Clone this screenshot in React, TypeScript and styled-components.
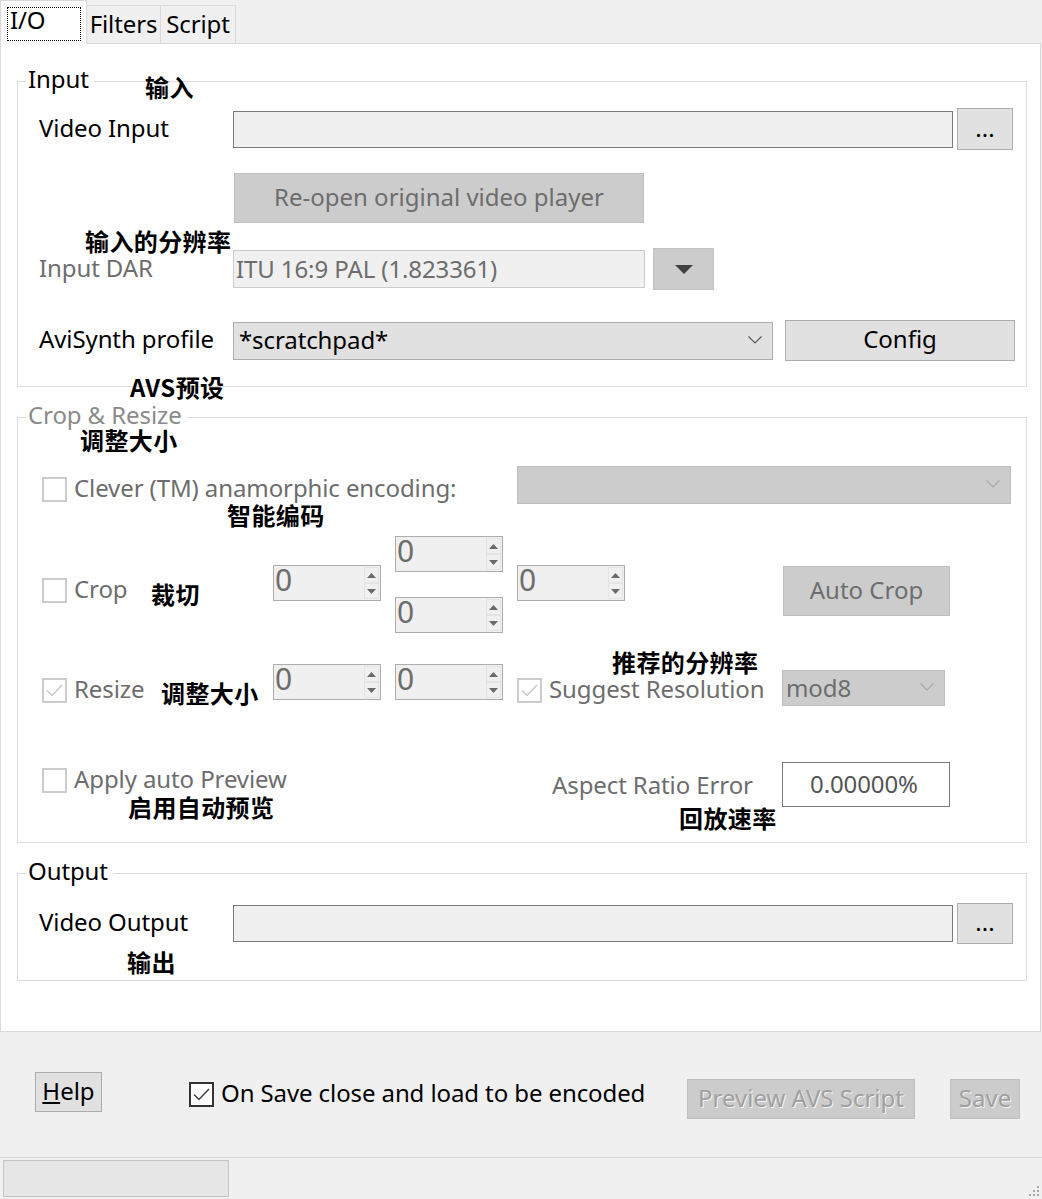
import React from "react";
import styled, { createGlobalStyle, css } from "styled-components";

const UI_FONT = `"Noto Sans", "Open Sans", sans-serif`;
const CJK_FONT = `"Noto Sans CJK SC", "Noto Sans", sans-serif`;
const GRAY_TEXT = "#6d6d6d";

const GlobalStyle = createGlobalStyle`
  * { box-sizing: border-box; }
  html, body { margin: 0; padding: 0; background: #f0f0f0; }
  body {
    font-family: ${UI_FONT};
    font-size: 24px;
    letter-spacing: -0.1px;
    color: #000;
  }
`;

const Window = styled.div`
  width: 1042px;
  height: 1199px;
  display: flex;
  flex-direction: column;
  background: #f0f0f0;
  overflow: hidden;
`;

const TabStrip = styled.div`
  height: 43px;
  flex: none;
  display: flex;
  align-items: flex-end;
  position: relative;
  z-index: 2;
`;

const Tab = styled.div<{ $w: number; $active?: boolean }>`
  width: ${(p) => p.$w}px;
  height: 38px;
  line-height: 35px;
  text-align: center;
  white-space: nowrap;
  border-top: 1px solid #d9d9d9;
  border-right: 1px solid #d9d9d9;
  ${(p) =>
    p.$active &&
    css`
      height: 44px;
      margin-bottom: -1px;
      padding: 6px 0 0 6px;
      text-align: left;
      background: #fff;
      border-left: 1px solid #d9d9d9;
    `}
`;

const FocusRect = styled.div`
  width: 74px;
  height: 34px;
  padding-left: 2px;
  line-height: 23px;
  border: 1px dotted #000;
`;

const TabPanel = styled.div`
  width: 1041px;
  height: 989px;
  flex: none;
  display: flex;
  flex-direction: column;
  gap: 30px;
  padding-top: 37px;
  background: #fff;
  border: 1px solid #d9d9d9;
`;

const Group = styled.section<{ $h: number }>`
  position: relative;
  width: 1010px;
  height: ${(p) => p.$h}px;
  margin-left: 16px;
  flex: none;
  display: flex;
  flex-direction: column;
  border: 1px solid #dcdcdc;
`;

const Legend = styled.span<{ $disabled?: boolean }>`
  position: absolute;
  top: -19px;
  left: 8px;
  padding: 0 5px 0 2px;
  line-height: 32px;
  background: #fff;
  color: ${(p) => (p.$disabled ? "#8a8a8a" : "#000")};
`;

const Note = styled.span<{ $x: number; $y: number }>`
  position: absolute;
  left: ${(p) => p.$x}px;
  top: ${(p) => p.$y}px;
  font-family: ${CJK_FONT};
  font-weight: 700;
  font-size: 24px;
  letter-spacing: 0.4px;
  line-height: 26px;
  color: #000;
  white-space: nowrap;
  z-index: 3;
`;

const Row = styled.div<{ $mt: number; $h: number; $pl?: number; $top?: boolean }>`
  display: flex;
  align-items: ${(p) => (p.$top ? "flex-start" : "center")};
  margin-top: ${(p) => p.$mt}px;
  height: ${(p) => p.$h}px;
  padding-left: ${(p) => p.$pl ?? 21}px;
  flex: none;
`;

const FieldLabel = styled.span<{ $disabled?: boolean }>`
  width: 194px;
  flex: none;
  padding-bottom: 4px;
  white-space: nowrap;
  color: ${(p) => (p.$disabled ? GRAY_TEXT : "#000")};
`;

const PathBox = styled.div`
  width: 720px;
  height: 37px;
  flex: none;
  background: #f0f0f0;
  border: 1px solid #7a7a7a;
`;

const DarBox = styled.div`
  width: 412px;
  height: 38px;
  flex: none;
  padding-left: 2px;
  line-height: 35px;
  white-space: nowrap;
  color: ${GRAY_TEXT};
  background: #f0f0f0;
  border: 1px solid #cccccc;
`;

const ValueBox = styled.div`
  width: 168px;
  height: 45px;
  flex: none;
  padding-right: 4px;
  line-height: 41px;
  text-align: center;
  color: #555;
  background: #fff;
  border: 1px solid #7a7a7a;
`;

type Variant = "normal" | "disabled" | "faded";

const Button = styled.button<{
  $w: number;
  $h: number;
  $variant?: Variant;
  $ml?: number;
  $mt?: number;
}>`
  width: ${(p) => p.$w}px;
  height: ${(p) => p.$h}px;
  margin: ${(p) => p.$mt ?? 0}px 0 0 ${(p) => p.$ml ?? 0}px;
  flex: none;
  padding: 0 0 4px;
  font: inherit;
  white-space: nowrap;
  background: #e1e1e1;
  border: 1px solid #adadad;
  color: #000;
  ${(p) =>
    p.$variant === "disabled" &&
    css`
      background: #cccccc;
      border-color: #bfbfbf;
      color: ${GRAY_TEXT};
    `}
  ${(p) =>
    p.$variant === "faded" &&
    css`
      background: #cccccc;
      border-color: #bfbfbf;
      color: #a0a0a0;
      text-shadow: 1px 1px 0 #f4f4f4;
    `}
`;

const DropButton = styled.div`
  width: 61px;
  height: 42px;
  margin-left: 8px;
  flex: none;
  display: flex;
  align-items: center;
  justify-content: center;
  background: #cccccc;
  border: 1px solid #c2c2c2;
`;

const Combo = styled.div<{ $w: number; $h: number; $disabled?: boolean; $mt?: number; $pl?: number }>`
  width: ${(p) => p.$w}px;
  height: ${(p) => p.$h}px;
  margin-top: ${(p) => p.$mt ?? 0}px;
  flex: none;
  display: flex;
  align-items: center;
  justify-content: space-between;
  padding: 0 10px 2px ${(p) => p.$pl ?? 5}px;
  white-space: nowrap;
  background: ${(p) => (p.$disabled ? "#cccccc" : "#e1e1e1")};
  border: 1px solid ${(p) => (p.$disabled ? "#bfbfbf" : "#adadad")};
  color: ${(p) => (p.$disabled ? GRAY_TEXT : "#000")};
`;

const CheckField = styled.div<{ $w?: number; $mt?: number; $ml?: number; $disabled?: boolean }>`
  ${(p) => (p.$w ? `width: ${p.$w}px;` : "")}
  height: 25px;
  margin: ${(p) => p.$mt ?? 0}px 0 0 ${(p) => p.$ml ?? 0}px;
  flex: none;
  display: flex;
  align-items: center;
  gap: 7px;
  white-space: nowrap;
  color: ${(p) => (p.$disabled ? GRAY_TEXT : "#000")};
`;

const CheckText = styled.span`
  line-height: 25px;
  padding-bottom: 5px;
`;

const Box = styled.span<{ $dark?: boolean }>`
  width: 25px;
  height: 25px;
  flex: none;
  display: flex;
  align-items: center;
  justify-content: center;
  background: #fff;
  border: 2px solid ${(p) => (p.$dark ? "#333" : "#cccccc")};
`;

const NumBox = styled.div<{ $mt?: number; $ml?: number }>`
  width: 108px;
  height: 36px;
  margin: ${(p) => p.$mt ?? 0}px 0 0 ${(p) => p.$ml ?? 0}px;
  flex: none;
  display: flex;
  justify-content: space-between;
  padding-left: 1px;
  font-size: 30px;
  line-height: 28px;
  color: ${GRAY_TEXT};
  background: #f0f0f0;
  border: 1px solid #adadad;
`;

const Spinner = styled.div`
  width: 15px;
  margin: 1px;
  display: flex;
  flex-direction: column;
`;

const SpinHalf = styled.span`
  flex: 1;
  display: flex;
  align-items: center;
  justify-content: center;
  background: #f0f0f0;
  border: 1px solid #e4e4e4;
`;

const NumColumn = styled.div`
  margin-left: 14px;
  display: flex;
  flex-direction: column;
  gap: 25px;
  flex: none;
`;

const SideLabel = styled.span`
  width: 230px;
  height: 25px;
  margin-top: 10px;
  flex: none;
  line-height: 25px;
  white-space: nowrap;
  color: ${GRAY_TEXT};
`;

const Footer = styled.div`
  height: 125px;
  flex: none;
  display: flex;
  align-items: flex-start;
  padding-left: 35px;
`;

const StatusBar = styled.div`
  height: 42px;
  flex: none;
  display: flex;
  justify-content: space-between;
  align-items: flex-end;
  padding: 2px 2px 2px 3px;
  border-top: 1px solid #d7d7d7;
`;

const StatusPanel = styled.div`
  width: 226px;
  height: 37px;
  align-self: flex-start;
  background: #e6e6e6;
  border: 1px solid #c4c4c4;
`;

const Chevron = ({ color }: { color: string }) => (
  <svg width="14" height="8" viewBox="0 0 14 8">
    <polyline points="0.5,0.5 7,7 13.5,0.5" fill="none" stroke={color} strokeWidth="1.1" />
  </svg>
);

const Tick = ({ color }: { color: string }) => (
  <svg width="17" height="13" viewBox="0 0 17 13">
    <polyline points="1,6.5 6,11.5 16,1" fill="none" stroke={color} strokeWidth="1.5" />
  </svg>
);

const Check = ({
  label,
  checked,
  dark,
  disabled = true,
  w,
  mt,
  ml,
}: {
  label: string;
  checked?: boolean;
  dark?: boolean;
  disabled?: boolean;
  w?: number;
  mt?: number;
  ml?: number;
}) => (
  <CheckField $w={w} $mt={mt} $ml={ml} $disabled={disabled}>
    <Box $dark={dark}>{checked && <Tick color={dark ? "#444" : "#c8c8c8"} />}</Box>
    <CheckText>{label}</CheckText>
  </CheckField>
);

const Arrow = ({ up }: { up?: boolean }) => (
  <svg width="9" height="5" viewBox="0 0 9 5">
    <polygon points={up ? "0,5 4.5,0 9,5" : "0,0 4.5,5 9,0"} fill="#6a6a6a" />
  </svg>
);

const Numeric = ({ mt, ml }: { mt?: number; ml?: number }) => (
  <NumBox $mt={mt} $ml={ml}>
    <span>0</span>
    <Spinner>
      <SpinHalf>
        <Arrow up />
      </SpinHalf>
      <SpinHalf>
        <Arrow />
      </SpinHalf>
    </Spinner>
  </NumBox>
);

const Grip = () => (
  <svg width="12" height="12" viewBox="0 0 12 12">
    {[
      [9, 1],
      [5, 5],
      [9, 5],
      [1, 9],
      [5, 9],
      [9, 9],
    ].map(([x, y]) => (
      <rect key={`${x}-${y}`} x={x} y={y} width="2" height="2" fill="#a8a8a8" />
    ))}
  </svg>
);

export default function App() {
  return (
    <>
      <GlobalStyle />
      <Window>
        <TabStrip>
          <Tab $w={87} $active>
            <FocusRect>I/O</FocusRect>
          </Tab>
          <Tab $w={74}>Filters</Tab>
          <Tab $w={75}>Script</Tab>
        </TabStrip>

        <TabPanel>
          <Group $h={306}>
            <Legend>Input</Legend>
            <Note $x={127} $y={-8}>输入</Note>
            <Note $x={67} $y={146}>输入的分辨率</Note>
            <Note $x={112} $y={292}>AVS预设</Note>

            <Row $mt={25} $h={44}>
              <FieldLabel>Video Input</FieldLabel>
              <PathBox />
              <Button $w={56} $h={42} $ml={4}>
                ...
              </Button>
            </Row>
            <Row $mt={22} $h={50} $pl={216}>
              <Button $w={410} $h={50} $variant="disabled">
                Re-open original video player
              </Button>
            </Row>
            <Row $mt={25} $h={42}>
              <FieldLabel $disabled>Input DAR</FieldLabel>
              <DarBox>ITU 16:9 PAL (1.823361)</DarBox>
              <DropButton>
                <svg width="18" height="9" viewBox="0 0 18 9">
                  <polygon points="0,0 18,0 9,9" fill="#404040" />
                </svg>
              </DropButton>
            </Row>
            <Row $mt={30} $h={41}>
              <FieldLabel>AviSynth profile</FieldLabel>
              <Combo $w={540} $h={38}>
                <span>*scratchpad*</span>
                <Chevron color="#555" />
              </Combo>
              <Button $w={230} $h={41} $ml={12}>
                Config
              </Button>
            </Row>
          </Group>

          <Group $h={426}>
            <Legend $disabled>Crop &amp; Resize</Legend>
            <Note $x={62} $y={9}>调整大小</Note>
            <Note $x={209} $y={84}>智能编码</Note>
            <Note $x={133} $y={163}>裁切</Note>
            <Note $x={143} $y={262}>调整大小</Note>
            <Note $x={594} $y={231}>推荐的分辨率</Note>
            <Note $x={110} $y={376}>启用自动预览</Note>
            <Note $x={661} $y={387}>回放速率</Note>

            <Row $mt={48} $h={38} $pl={24} $top>
              <Check label="Clever (TM) anamorphic encoding:" w={475} mt={11} />
              <Combo $w={494} $h={38} $disabled>
                <span />
                <Chevron color="#a9a9a9" />
              </Combo>
            </Row>
            <Row $mt={32} $h={97} $pl={24} $top>
              <Check label="Crop" w={231} mt={42} />
              <Numeric mt={29} />
              <NumColumn>
                <Numeric />
                <Numeric />
              </NumColumn>
              <Numeric mt={29} ml={14} />
              <Button $w={167} $h={50} $ml={158} $mt={30} $variant="disabled">
                Auto Crop
              </Button>
            </Row>
            <Row $mt={31} $h={42} $pl={24} $top>
              <Check label="Resize" checked w={231} mt={14} />
              <Numeric />
              <Numeric ml={14} />
              <Check label="Suggest Resolution" checked w={265} mt={14} ml={14} />
              <Combo $w={163} $h={36} $mt={6} $pl={3} $disabled>
                <span>mod8</span>
                <Chevron color="#a9a9a9" />
              </Combo>
            </Row>
            <Row $mt={56} $h={45} $pl={24} $top>
              <Check label="Apply auto Preview" w={510} mt={6} />
              <SideLabel>Aspect Ratio Error</SideLabel>
              <ValueBox>0.00000%</ValueBox>
            </Row>
          </Group>

          <Group $h={108}>
            <Legend>Output</Legend>
            <Note $x={109} $y={75}>输出</Note>
            <Row $mt={29} $h={41}>
              <FieldLabel>Video Output</FieldLabel>
              <PathBox />
              <Button $w={56} $h={41} $ml={4}>
                ...
              </Button>
            </Row>
          </Group>
        </TabPanel>

        <Footer>
          <Button $w={67} $h={40} $mt={40}>
            <u>H</u>elp
          </Button>
          <Check
            label="On Save close and load to be encoded"
            checked
            dark
            disabled={false}
            w={498}
            mt={50}
            ml={87}
          />
          <Button $w={228} $h={40} $mt={47} $variant="faded">
            Preview AVS Script
          </Button>
          <Button $w={70} $h={40} $mt={47} $ml={35} $variant="faded">
            Save
          </Button>
        </Footer>

        <StatusBar>
          <StatusPanel />
          <Grip />
        </StatusBar>
      </Window>
    </>
  );
}
